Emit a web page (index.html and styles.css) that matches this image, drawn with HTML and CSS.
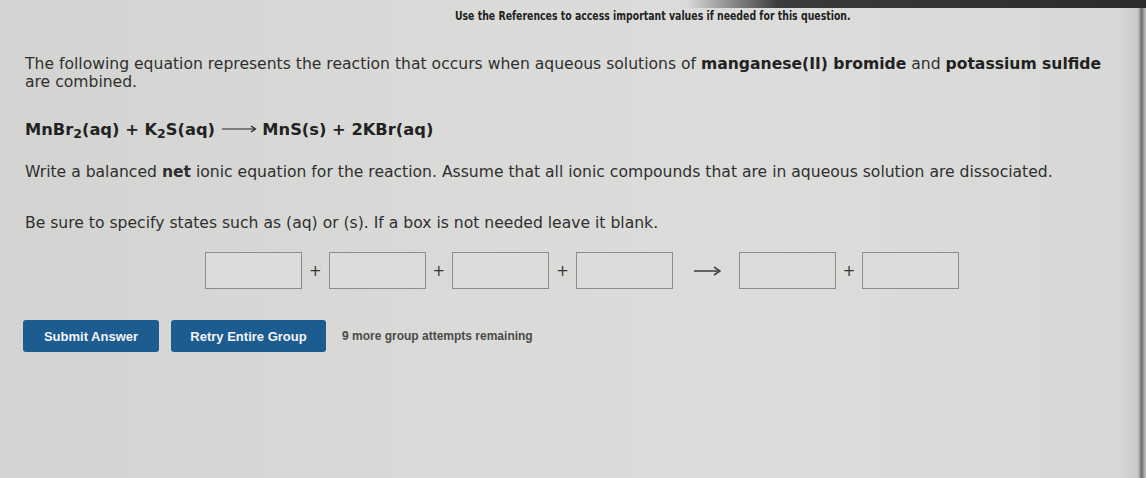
FILE: index.html
```html
<!DOCTYPE html>
<html>
<head>
<meta charset="utf-8">
<link rel="stylesheet" href="styles.css">
</head>
<body>
<div class="topbar"></div>
<div class="page">
  <div class="refs"><span class="refs-text">Use the References to access important values if needed for this question.</span></div>
  <div class="content">
    <p class="intro">The following equation represents the reaction that occurs when aqueous solutions of <b>manganese(II) bromide</b> and <b>potassium sulfide</b> are combined.</p>
    <p class="eq">MnBr<sub>2</sub>(aq) + K<sub>2</sub>S(aq) <svg class="eqarrow" width="36" height="10" viewBox="0 0 36 10"><line x1="1" y1="5" x2="34" y2="5" stroke="#222" stroke-width="1.2"/><path d="M30 2 L34.5 5 L30 8" fill="none" stroke="#222" stroke-width="1.2"/></svg> MnS(s) + 2KBr(aq)</p>
    <p class="q">Write a balanced <b>net</b> ionic equation for the reaction. Assume that all ionic compounds that are in aqueous solution are dissociated.</p>
    <p class="q2">Be sure to specify states such as (aq) or (s). If a box is not needed leave it blank.</p>
    <div class="answer">
      <div class="box"></div><span class="plus">+</span>
      <div class="box"></div><span class="plus">+</span>
      <div class="box"></div><span class="plus">+</span>
      <div class="box"></div>
      <svg class="arrow" width="28" height="12" viewBox="0 0 28 12"><line x1="1" y1="6" x2="26" y2="6" stroke="#444" stroke-width="1.6"/><path d="M21 2 L27 6 L21 10" fill="none" stroke="#444" stroke-width="1.6"/></svg>
      <div class="box"></div><span class="plus">+</span>
      <div class="box"></div>
    </div>
    <div class="actions">
      <button class="btn submit">Submit Answer</button>
      <button class="btn retry">Retry Entire Group</button>
      <span class="remaining">9 more group attempts remaining</span>
    </div>
  </div>
</div>
</body>
</html>
```
FILE: styles.css
```css
html, body {
  margin: 0;
  padding: 0;
  width: 1146px;
  height: 478px;
  overflow: hidden;
}
body {
  background: linear-gradient(90deg, #d3d4d1 0%, #dadbd8 40%, #dcdcda 70%, #d8d9d6 97.5%, #c9cac7 99.3%, #6f706e 99.6%, #c8c9c6 100%);
  font-family: "DejaVu Sans", Verdana, sans-serif;
  color: #2f2f2f;
  position: relative;
}
.topbar {
  position: absolute;
  top: 0;
  right: 0;
  width: 460px;
  height: 8px;
  background: linear-gradient(90deg, rgba(40,40,40,0) 0%, #3a3b3a 20%, #2a2b2a 100%);
}
.page {
  padding-top: 5px;
}
.refs {
  text-align: center;
  padding-left: 160px;
}
.refs-text {
  display: inline-block;
  font-family: "DejaVu Sans", sans-serif;
  font-weight: bold;
  font-size: 13px;
  color: #222;
  transform: scaleX(0.72);
}
.content {
  padding-left: 25px;
  width: 1100px;
}
.content p {
  margin: 0;
  font-size: 15.6px;
  line-height: 18px;
}
.intro {
  padding-top: 31px;
}
.intro b {
  color: #222;
}
.eq {
  margin-top: 30px !important;
  font-weight: bold;
  font-size: 16.3px !important;
  color: #222;
}
.eq sub {
  font-size: 12.5px;
  vertical-align: -3px;
  line-height: 0;
}
.eqarrow {
  vertical-align: 1px;
}
.q {
  margin-top: 24px !important;
}
.q2 {
  margin-top: 33px !important;
}
.answer {
  display: flex;
  align-items: center;
  margin-top: 20px;
  margin-left: 180px;
}
.box {
  width: 97px;
  height: 37px;
  border: 1px solid #8c8c8a;
  background: #dcddda;
  box-sizing: border-box;
}
.plus {
  font-size: 15px;
  color: #333;
  padding: 0 7px;
}
.arrow {
  margin: 0 18px 0 20px;
}
.actions {
  display: flex;
  align-items: center;
  margin-top: 31px;
  margin-left: -2px;
}
.btn {
  border: none;
  border-radius: 3px;
  background: #1d5c91;
  color: #f2f4f6;
  font-family: "Liberation Sans", Arial, sans-serif;
  font-weight: bold;
  font-size: 13px;
  height: 32px;
  padding: 0;
}
.submit {
  width: 136px;
  margin-right: 12px;
}
.retry {
  width: 155px;
  margin-right: 16px;
}
.remaining {
  font-family: "Liberation Sans", Arial, sans-serif;
  font-weight: bold;
  font-size: 12px;
  color: #4a4a4a;
}
```
